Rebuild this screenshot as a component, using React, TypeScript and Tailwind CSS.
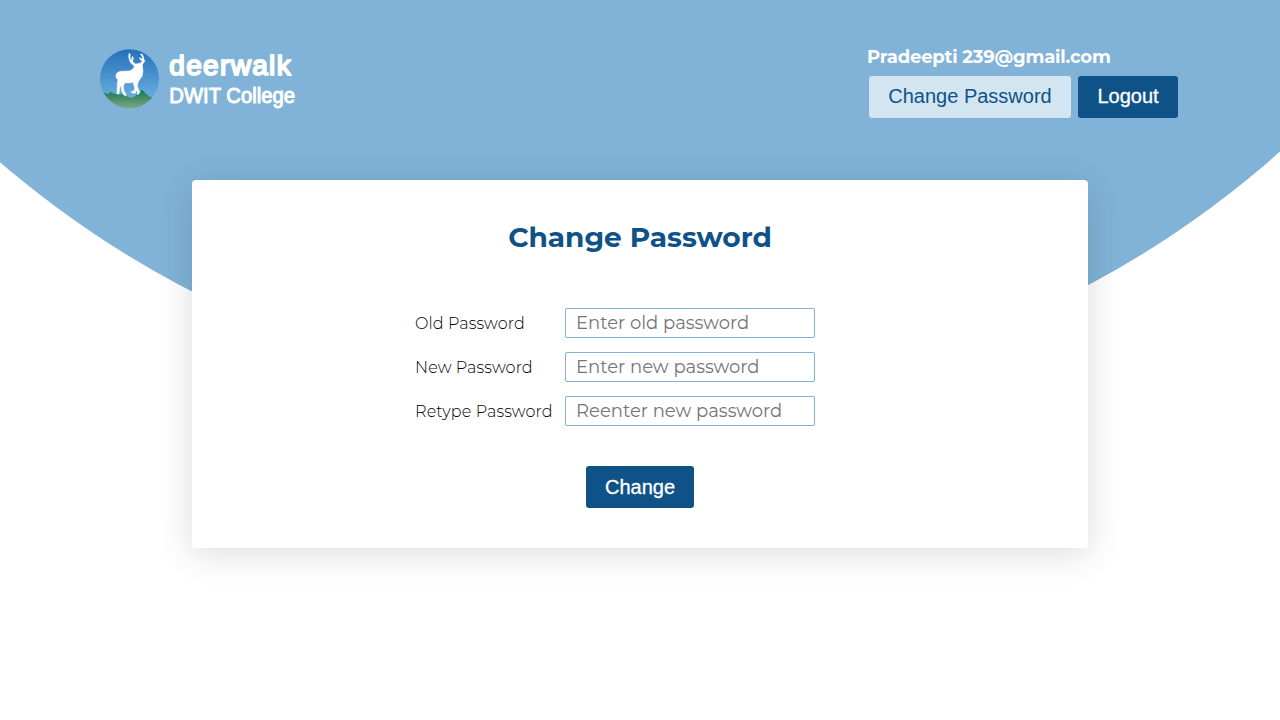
const fields = [
  { id: 'old', label: 'Old Password', hint: 'Enter old password' },
  { id: 'new', label: 'New Password', hint: 'Enter new password' },
  { id: 'retype', label: 'Retype Password', hint: 'Reenter new password' },
];

function Logo() {
  return (
    <svg className="block h-[80px] w-[220px]" viewBox="0 0 660 240" role="img" aria-label="deerwalk DWIT College">
      <defs>
        <linearGradient id="sky" x1="0" y1="0" x2="0" y2="1">
          <stop offset="0" stopColor="#2470b8" />
          <stop offset="0.75" stopColor="#63a9dc" />
        </linearGradient>
        <linearGradient id="land" x1="0" y1="0" x2="0" y2="1">
          <stop offset="0" stopColor="#087c50" />
          <stop offset="0.35" stopColor="#3b8a63" />
          <stop offset="1" stopColor="#8fa98a" />
        </linearGradient>
        <clipPath id="disc"><circle cx="118.5" cy="116" r="88.5" /></clipPath>
      </defs>
      <g clipPath="url(#disc)">
        <rect x="30" y="27" width="180" height="180" fill="url(#sky)" />
        <path d="M30 158 L42 158 L53 162 L63 156 L74 161 L87 163 L103 162 Q112 174 126 173 Q136 171 142 161 L157 149 L166 160 L180 170 L187 172 L205 180 V210 H30 Z" fill="url(#land)" />
      </g>
      <path fill="#fff" stroke="#fff" strokeWidth="1.5" strokeLinejoin="round" d="M117 40 L121 43 L120 54 L124 62 L127 49 L130 53 L128 65 L137 72 L150 70 L157 64 L149 57 L149 53 L157 58 L156 48 L151 43 L156 42 L160 49 L162 59 L165 62 L160 70 L157 75 L159 94 L157 107 L151 116 L145 125 L142 136 L145 148 L150 157 L145 163 L141 163 L143 157 L136 149 L137 159 L128 160 L123 155 L131 154 L134 145 L129 127 Q117 131 105 128 L100 139 L102 153 L108 163 L107 168 L101 165 L94 151 L94 135 L89 145 L87 162 L81 162 L82 128 L84 119 Q76 114 78 105 Q80 96 92 94 L119 93 Q129 89 133 81 L131 76 L123 70 L119 62 L116 51 Z" />
      <g fill="#fff" stroke="#fff" strokeLinejoin="round" strokeLinecap="round" fontFamily='"Liberation Sans", Arial, sans-serif'>
        <text x="238" y="105" fontSize="85" strokeWidth="5.5" letterSpacing="4" textLength="368" lengthAdjust="spacingAndGlyphs">deerwalk</text>
        <text x="238" y="190" fontSize="67" strokeWidth="3" textLength="377" lengthAdjust="spacingAndGlyphs">DWIT College</text>
      </g>
    </svg>
  );
}

export default function App() {
  return (
    <div className="relative isolate h-[720px] w-full overflow-hidden bg-white font-['Montserrat','Inter',sans-serif]">
      <div className="absolute -top-[1542px] left-[calc(50%-976px)] -z-10 h-[1940px] w-[1940px] rounded-full bg-[#80b3d7]" />
      <header className="flex h-[180px] items-start justify-between pl-[90px] pr-[102px] pt-10">
        <Logo />
        <div className="flex w-[311px] flex-col pt-1">
          <p className="whitespace-nowrap text-[18px] font-bold leading-[26px] tracking-[-0.18px] text-white">Pradeepti 239@gmail.com</p>
          <div className="mt-1.5 flex gap-[7px] pl-0.5 font-['Liberation_Sans',Arial,sans-serif] text-[20px]">
            <button className="h-[42px] w-[202px] whitespace-nowrap rounded-[3px] bg-[#d3e5f1] pb-0.5 text-[#0f5288]">Change Password</button>
            <button className="h-[42px] w-[100px] rounded-[3px] bg-[#0f5288] pb-0.5 text-white [-webkit-text-stroke:0.3px_white]">Logout</button>
          </div>
        </div>
      </header>
      <main className="mx-auto flex h-[368px] w-[896px] flex-col items-center rounded bg-white pt-9 shadow-[0_6px_36px_rgba(0,0,0,0.14)]">
        <h1 className="text-[28px] font-bold leading-[42px] text-[#0f5288]">Change Password</h1>
        <form className="mt-[50px] flex w-[450px] flex-col gap-3.5">
          {fields.map((f) => (
            <div key={f.id} className="flex h-[30px] items-center">
              <label htmlFor={f.id} className="w-[150px] whitespace-nowrap pt-0.5 text-base font-light tracking-[0.12px] text-black">{f.label}</label>
              <input
                id={f.id}
                type="password"
                placeholder={f.hint}
                className="h-[30px] w-[250px] rounded-[2px] border border-[#80b3d7] bg-white px-2.5 text-[18px] placeholder:text-[#757575]"
              />
            </div>
          ))}
        </form>
        <button className="mt-10 h-[42px] w-[108px] rounded-[3px] bg-[#0f5288] font-['Liberation_Sans',Arial,sans-serif] text-[20px] text-white [-webkit-text-stroke:0.3px_white]">Change</button>
      </main>
    </div>
  );
}
